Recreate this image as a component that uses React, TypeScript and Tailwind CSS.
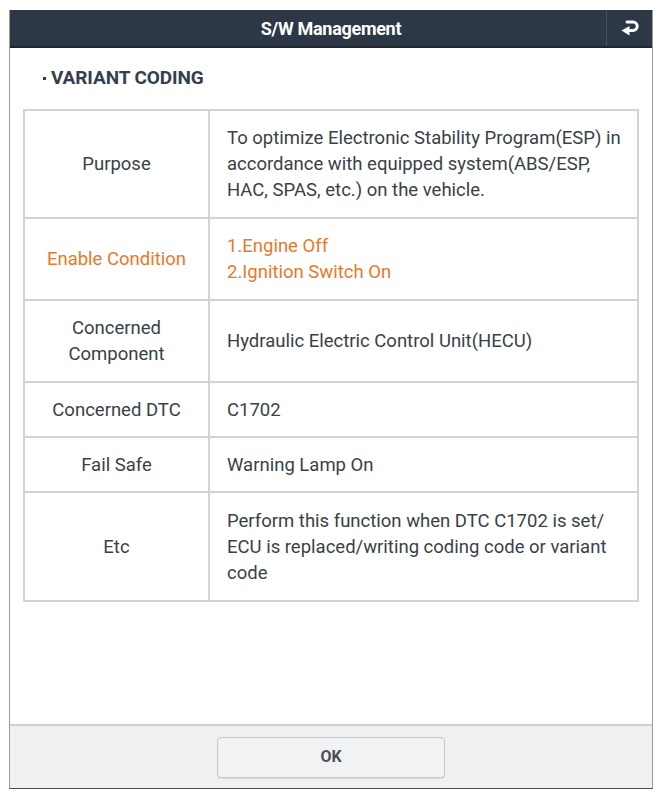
import React from "react";

type Row = {
  label: string[];
  value: string[];
  height: string;
  accent?: boolean;
};

const rows: Row[] = [
  {
    label: ["Purpose"],
    value: [
      "To optimize Electronic Stability Program(ESP) in",
      "accordance with equipped system(ABS/ESP,",
      "HAC, SPAS, etc.) on the vehicle.",
    ],
    height: "h-[108px]",
  },
  {
    label: ["Enable Condition"],
    value: ["1.Engine Off", "2.Ignition Switch On"],
    height: "h-[82px]",
    accent: true,
  },
  {
    label: ["Concerned", "Component"],
    value: ["Hydraulic Electric Control Unit(HECU)"],
    height: "h-[82px]",
  },
  { label: ["Concerned DTC"], value: ["C1702"], height: "h-[55px]" },
  { label: ["Fail Safe"], value: ["Warning Lamp On"], height: "h-[55px]" },
  {
    label: ["Etc"],
    value: [
      "Perform this function when DTC C1702 is set/",
      "ECU is replaced/writing coding code or variant",
      "code",
    ],
    height: "h-[109px]",
  },
];

function ReturnIcon() {
  return (
    <svg width="20" height="18" viewBox="0 0 20 18" fill="none">
      <path
        d="M7 3 H13 a4.2 4.2 0 0 1 0 8.4 H8"
        stroke="white"
        strokeWidth="3"
        strokeLinecap="round"
        strokeLinejoin="round"
      />
      <path d="M9.5 7 L1.5 11.6 L9.5 16.4 Z" fill="white" />
    </svg>
  );
}

export default function App() {
  return (
    <div className="w-[662px] h-[798px] bg-white pt-[10px] pl-[9px] font-['Roboto','Liberation_Sans',sans-serif]">
      <div className="w-[644px] h-[779px] flex flex-col border-x border-[#9c9c9c] border-b border-b-[#4a4a4a]">
        {/* Title bar */}
        <header className="h-[38px] shrink-0 flex bg-[#2c3846] border-b-2 border-[#1e2731]">
          <div className="w-[46px]" />
          <div className="flex-1 flex items-center justify-center text-white text-[18px] font-bold tracking-[-0.3px]">
            S/W Management
          </div>
          <div className="w-[46px] flex items-center justify-center border-l border-[#44505d]">
            <ReturnIcon />
          </div>
        </header>

        {/* Body */}
        <main className="flex-1 px-[13px]">
          <h2 className="h-[61px] flex items-center pl-[20px] text-[19px] font-bold text-[#343e4e] tracking-[-0.1px]">
            <span className="w-[3px] h-[3px] bg-[#343e4e] mr-[5px]" />
            VARIANT CODING
          </h2>
          <table className="w-full border-collapse border-2 border-[#c2c2c2] text-[18.5px] leading-[26px] text-[#3a3f48]">
            <tbody>
              {rows.map((r, i) => (
                <tr key={i} className={r.height}>
                  <td
                    className={`w-[185px] border-2 border-[#d3d3d3] text-center align-middle ${
                      r.accent ? "text-[#e8792c]" : ""
                    }`}
                  >
                    {r.label.map((l, j) => (
                      <div key={j}>{l}</div>
                    ))}
                  </td>
                  <td
                    className={`border-2 border-[#d3d3d3] pl-[17px] pr-[2px] align-middle ${
                      r.accent ? "text-[#e8792c]" : ""
                    }`}
                  >
                    {r.value.map((v, j) => (
                      <div key={j} className="whitespace-nowrap">
                        {v}
                      </div>
                    ))}
                  </td>
                </tr>
              ))}
            </tbody>
          </table>
        </main>

        {/* Footer */}
        <footer className="h-[64px] shrink-0 flex items-center justify-center bg-[#eff0f2] border-t-2 border-[#cdd0d4]">
          <button className="w-[228px] h-[41px] rounded-[4px] border border-[#c3c6ca] bg-[#f1f2f4] text-[16px] font-bold text-[#4a505a] shadow-[0_1px_0_#d8dadd]">
            OK
          </button>
        </footer>
      </div>
    </div>
  );
}
